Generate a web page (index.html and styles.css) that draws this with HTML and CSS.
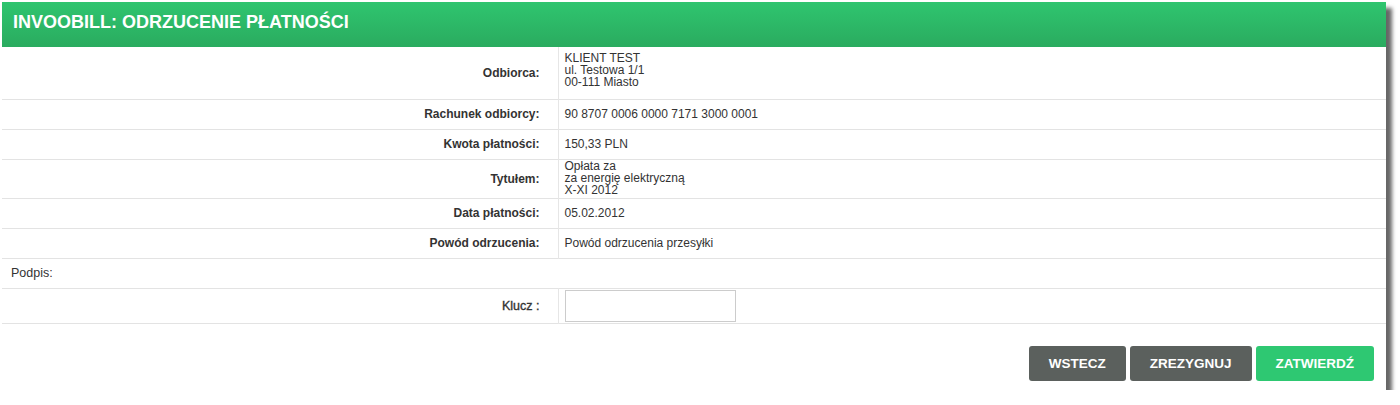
FILE: index.html
```html
<!DOCTYPE html>
<html lang="pl">
<head>
<meta charset="utf-8">
<title>InvooBILL</title>
<link rel="stylesheet" href="styles.css">
</head>
<body>
<div class="panel">
  <div class="panel-header">INVOOBILL: ODRZUCENIE PŁATNOŚCI</div>
  <table class="details">
    <tr class="row-multi">
      <th>Odbiorca:</th>
      <td>KLIENT TEST<br>ul. Testowa 1/1<br>00-111 Miasto</td>
    </tr>
    <tr>
      <th>Rachunek odbiorcy:</th>
      <td>90 8707 0006 0000 7171 3000 0001</td>
    </tr>
    <tr>
      <th>Kwota płatności:</th>
      <td>150,33 PLN</td>
    </tr>
    <tr class="row-title">
      <th>Tytułem:</th>
      <td>Opłata za<br>za energię elektryczną<br>X-XI 2012</td>
    </tr>
    <tr>
      <th>Data płatności:</th>
      <td>05.02.2012</td>
    </tr>
    <tr>
      <th>Powód odrzucenia:</th>
      <td>Powód odrzucenia przesyłki</td>
    </tr>
    <tr class="row-section">
      <td colspan="2">Podpis:</td>
    </tr>
    <tr class="row-key">
      <th class="narrow">Klucz :</th>
      <td><input class="key-input" type="password"></td>
    </tr>
  </table>
  <div class="actions">
    <button class="btn btn-dark">WSTECZ</button>
    <button class="btn btn-dark">ZREZYGNUJ</button>
    <button class="btn btn-green">ZATWIERDŹ</button>
  </div>
</div>
</body>
</html>
```
FILE: styles.css
```css
html, body {
  margin: 0;
  padding: 0;
  background: #ffffff;
}

body {
  font-family: "Liberation Sans", Arial, sans-serif;
  color: #333333;
}

.panel {
  margin: 2px 0 0 2px;
  width: 1384px;
  height: 388px;
  background: #ffffff;
  box-shadow: 6px 6px 4px rgba(0, 0, 0, 0.6);
  display: flex;
  flex-direction: column;
}

.panel-header {
  height: 45px;
  box-sizing: border-box;
  padding: 0 11px 4px;
  display: flex;
  align-items: center;
  background: linear-gradient(to bottom, #2fc56f, #2aab5f);
  color: #ffffff;
  font-weight: bold;
  font-size: 18px;
}

.details {
  width: 100%;
  border-collapse: collapse;
  font-size: 12px;
  line-height: 12px;
}

.details tr {
  border-bottom: 1px solid #e3e3e3;
  height: 30px;
}

.details th {
  width: 556px;
  box-sizing: border-box;
  text-align: right;
  font-weight: bold;
  padding: 0 18px 0 0;
  border-right: 1px solid #e6e6e6;
  font-size: 12px;
}

.details td {
  padding: 0 0 0 6px;
  vertical-align: middle;
}

.details .row-multi {
  height: 52px;
}

.details .row-multi td {
  padding-top: 0;
  padding-bottom: 5px;
}

.details .row-title {
  height: 39px;
}

.details .row-title td {
  padding-bottom: 1px;
}

.details .row-section td {
  padding-left: 9px;
  font-size: 12.5px;
}

.details .row-key {
  height: 35px;
}

.details th.narrow {
  font-size: 12.5px;
  font-weight: normal;
  -webkit-text-stroke: 0.35px #333333;
}

.key-input {
  display: block;
  width: 171px;
  height: 32px;
  box-sizing: border-box;
  border: 1px solid #cccccc;
  margin: 0;
  padding: 0 4px;
  background: #ffffff;
}

.actions {
  display: flex;
  justify-content: flex-end;
  gap: 4px;
  padding: 22px 12px 0 0;
}

.btn {
  height: 35px;
  padding: 0 20px;
  border: none;
  border-radius: 3px;
  color: #ffffff;
  font-family: "Liberation Sans", Arial, sans-serif;
  font-weight: bold;
  font-size: 13.5px;
  cursor: pointer;
}

.btn-dark {
  background: #5b605d;
}

.btn-green {
  background: #2ec872;
}
```
